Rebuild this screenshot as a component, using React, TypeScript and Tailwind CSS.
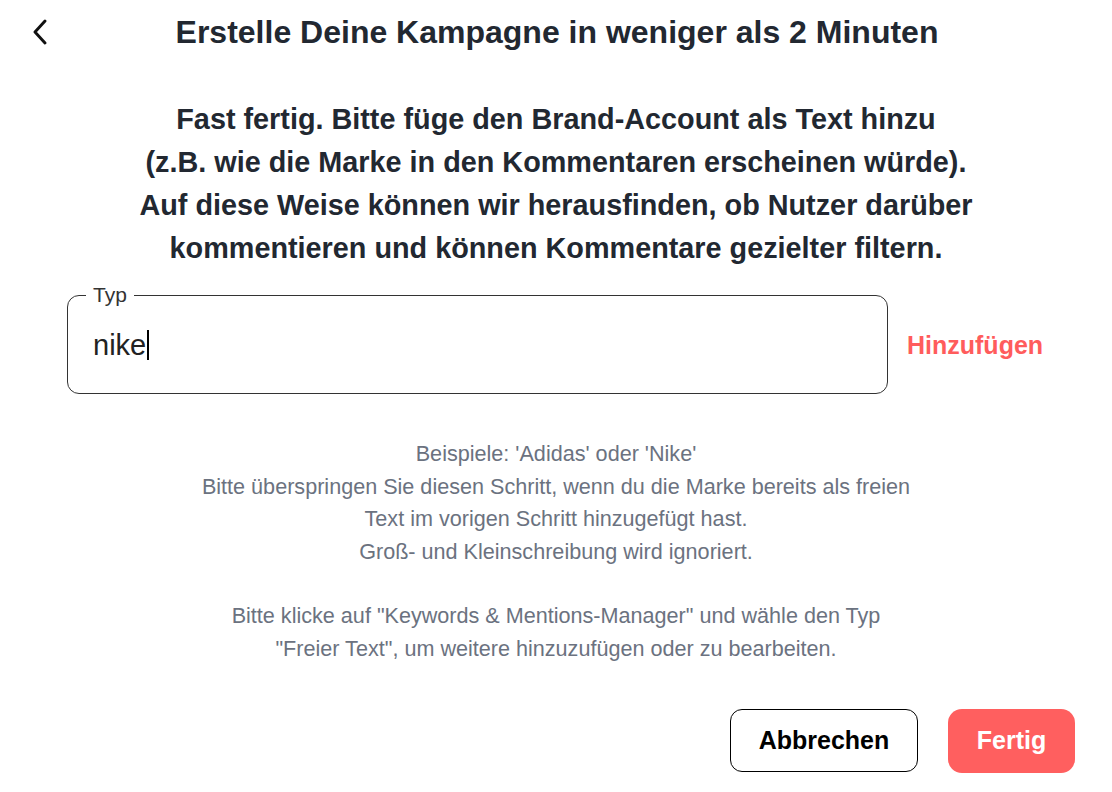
export default function App() {
  const value = 'nike';

  return (
    <div className="w-[1112px] h-[792px] bg-white font-['Liberation_Sans',Arial,sans-serif] text-[#222831] flex flex-col">
      {/* Header */}
      <div className="relative h-[64px] flex items-center justify-center">
        <button className="absolute left-[27px] top-[18px] w-[26px] h-[28px] flex items-center justify-center">
          <svg width="18" height="26" viewBox="0 0 18 26" fill="none">
            <path d="M14 2 L4 13 L14 24" stroke="#111" strokeWidth="2.9" strokeLinecap="round" strokeLinejoin="round" />
          </svg>
        </button>
        <h1 className="text-[32px] font-bold pl-[2px]">Erstelle Deine Kampagne in weniger als 2 Minuten</h1>
      </div>

      {/* Intro */}
      <p className="mt-[34px] text-center text-[28.8px] font-bold leading-[43px]">
        Fast fertig. Bitte füge den Brand-Account als Text hinzu<br />
        (z.B. wie die Marke in den Kommentaren erscheinen würde).<br />
        Auf diese Weise können wir herausfinden, ob Nutzer darüber<br />
        kommentieren und können Kommentare gezielter filtern.
      </p>

      {/* Input row */}
      <div className="mt-[14px] flex items-center pl-[67px]">
        <fieldset className="w-[821px] h-[110px] border border-[#333] rounded-[12px] px-[18px]">
          <legend className="px-[7px] text-[21px] leading-[22px] text-[#333]">Typ</legend>
          <div className="mt-[22px] pl-[7px] flex items-center text-[29px] leading-[34px] text-[#222]">
            <span>{value}</span>
            <span className="ml-[1px] w-[2px] h-[30px] bg-black" />
          </div>
        </fieldset>
        <button className="ml-[19px] mt-[14px] text-[25px] font-bold text-[#ff5c5c]">Hinzufügen</button>
      </div>

      {/* Help text */}
      <div className="mt-[44px] text-center text-[21.6px] leading-[32.5px] text-[#6b7280]">
        <p>
          Beispiele: 'Adidas' oder 'Nike'<br />
          Bitte überspringen Sie diesen Schritt, wenn du die Marke bereits als freien<br />
          Text im vorigen Schritt hinzugefügt hast.<br />
          Groß- und Kleinschreibung wird ignoriert.
        </p>
        <p className="mt-[32px]">
          Bitte klicke auf "Keywords &amp; Mentions-Manager" und wähle den Typ<br />
          "Freier Text", um weitere hinzuzufügen oder zu bearbeiten.
        </p>
      </div>

      {/* Actions */}
      <div className="mt-[44px] flex justify-end gap-[30px] pr-[37px]">
        <button className="w-[188px] h-[63px] rounded-[12px] border border-black text-[25px] font-bold text-black">Abbrechen</button>
        <button className="w-[127px] h-[64px] rounded-[14px] bg-[#ff5f5f] text-[25px] font-bold text-white">Fertig</button>
      </div>
    </div>
  );
}
